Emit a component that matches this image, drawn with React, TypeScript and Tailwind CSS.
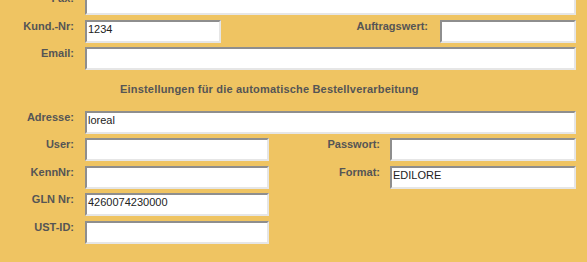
import React from 'react';

const font = { fontFamily: '"Liberation Sans", Arial, sans-serif' };

const Box = ({ value, w, className = '' }: { value?: string; w: string; className?: string }) => (
  <div
    className={`${w} h-[23px] shrink-0 bg-white border-2 border-t-[#8e8e8e] border-l-[#8e8e8e] border-b-[#e6e6e6] border-r-[#e6e6e6] px-[1px] pt-[1px] text-[11px] leading-[13px] text-[#222] ${className}`}
  >
    {value}
  </div>
);

const Label = ({ text, className = 'w-[74px]' }: { text: string; className?: string }) => (
  <div className={`${className} shrink-0 text-right text-[11px] leading-[13px] font-bold text-[#555]`}>{text}</div>
);

export default function App() {
  return (
    <div className="w-[587px] h-[262px] overflow-hidden bg-[#efc462]" style={font}>
      <div className="mt-[-8px]">
        <div className="flex gap-[11px]">
          <Label text="Fax:" />
          <Box w="w-[491px]" />
        </div>

        <div className="flex mt-[5px]">
          <Label text="Kund.-Nr:" />
          <Box w="w-[136px]" value="1234" className="ml-[11px]" />
          <Label text="Auftragswert:" className="w-[207px]" />
          <Box w="w-[136px]" className="ml-[12px]" />
        </div>

        <div className="flex gap-[11px] mt-[4px]">
          <Label text="Email:" />
          <Box w="w-[491px]" />
        </div>

        <div className="h-[41px] pl-[120px] pt-[13px] text-[11px] leading-[13px] tracking-[0.19px] font-bold text-[#555]">
          Einstellungen für die automatische Bestellverarbeitung
        </div>

        <div className="flex gap-[11px]">
          <Label text="Adresse:" />
          <Box w="w-[491px]" value="loreal" />
        </div>

        <div className="flex mt-[4px]">
          <Label text="User:" />
          <Box w="w-[184px]" className="ml-[11px]" />
          <Label text="Passwort:" className="w-[111px]" />
          <Box w="w-[186px]" className="ml-[10px]" />
        </div>

        <div className="flex mt-[5px]">
          <Label text="KennNr:" />
          <Box w="w-[184px]" className="ml-[11px]" />
          <Label text="Format:" className="w-[111px]" />
          <Box w="w-[186px]" value="EDILORE" className="ml-[10px]" />
        </div>

        <div className="flex gap-[11px] mt-[4px]">
          <Label text="GLN Nr:" />
          <Box w="w-[184px]" value="4260074230000" />
        </div>

        <div className="flex gap-[11px] mt-[5px]">
          <Label text="UST-ID:" />
          <Box w="w-[184px]" />
        </div>
      </div>
    </div>
  );
}
